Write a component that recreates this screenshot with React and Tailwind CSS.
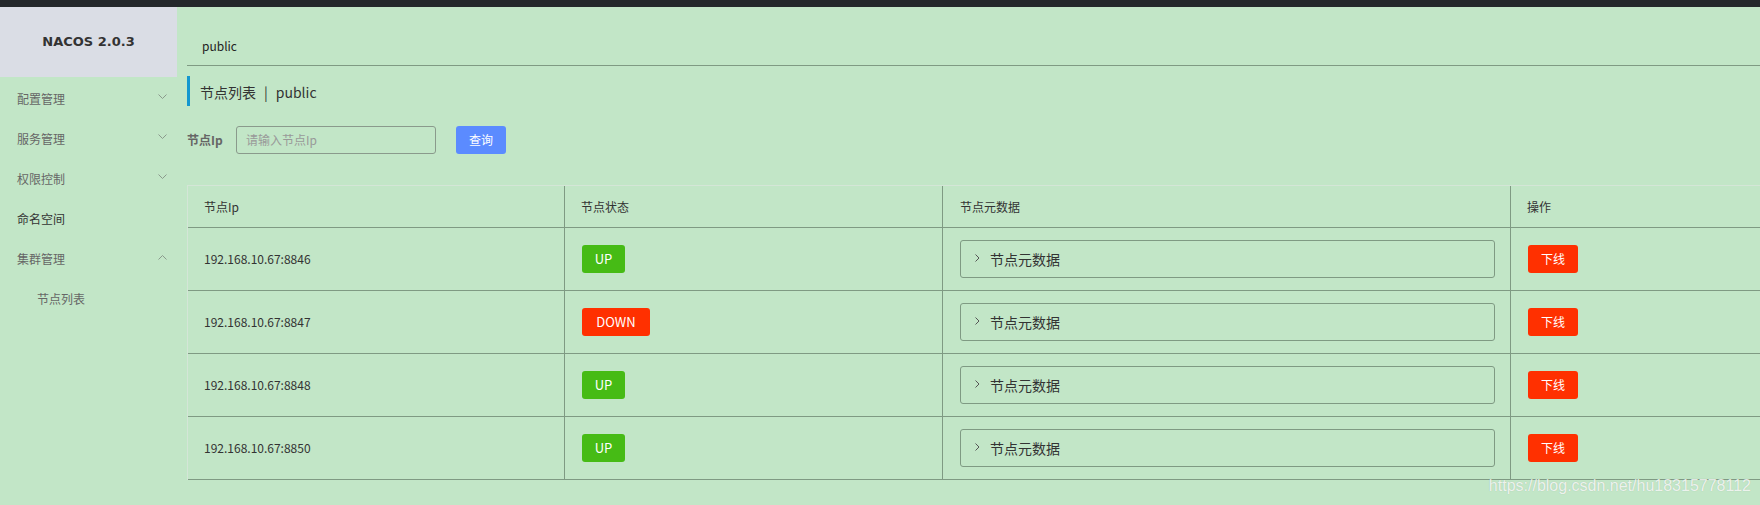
import React from "react";

const menu = [
  { label: "配置管理", arrow: "down" },
  { label: "服务管理", arrow: "down" },
  { label: "权限控制", arrow: "down" },
  { label: "命名空间", dark: true },
  { label: "集群管理", arrow: "up" },
];

const nodes = [
  { ip: "192.168.10.67:8846", state: "UP" },
  { ip: "192.168.10.67:8847", state: "DOWN" },
  { ip: "192.168.10.67:8848", state: "UP" },
  { ip: "192.168.10.67:8850", state: "UP" },
];

function Chevron({ dir }) {
  return (
    <svg width="9" height="6" viewBox="0 0 9 6" className="mb-[5px]">
      {dir === "down" ? (
        <polyline points="0.5,0.5 4.5,4.5 8.5,0.5" fill="none" stroke="#8a9a8c" strokeWidth="1" />
      ) : (
        <polyline points="0.5,5.5 4.5,1.5 8.5,5.5" fill="none" stroke="#8a9a8c" strokeWidth="1" />
      )}
    </svg>
  );
}

export default function App() {
  const font = { fontFamily: '"Noto Sans CJK SC", "Noto Sans", sans-serif' };

  return (
    <div className="w-[1760px] h-[505px] overflow-hidden bg-[#c2e6c7] flex flex-col relative" style={font}>
      <div className="h-[7px] bg-[#24282b] shrink-0"></div>

      <div className="flex flex-1">
        {/* sidebar */}
        <div className="w-[177px] shrink-0">
          <div className="h-[70px] bg-[#dadde5] flex items-center justify-center">
            <span className="text-[13px] font-bold text-[#333]" style={{ fontFamily: '"DejaVu Sans", sans-serif' }}>
              NACOS 2.0.3
            </span>
          </div>
          <div className="pt-[2px]">
            {menu.map((m) => (
              <div key={m.label} className="h-[40px] flex items-center justify-between pl-[17px] pr-[10px]">
                <span className={"text-[12px] " + (m.dark ? "text-[#333]" : "text-[#666]")}>{m.label}</span>
                {m.arrow && <Chevron dir={m.arrow} />}
              </div>
            ))}
            <div className="h-[40px] flex items-center pl-[37px]">
              <span className="text-[12px] text-[#666]">节点列表</span>
            </div>
          </div>
        </div>

        {/* main */}
        <div className="flex-1 pl-[10px]">
          <div className="h-[59px] border-b border-[#7f9a83] flex items-center pt-[20px] pl-[15px]">
            <span className="text-[12px] text-[#222]">public</span>
          </div>

          <div className="mt-[10px] h-[30px] border-l-[3px] border-[#1497cf] flex items-center pl-[10px] pt-[3px] text-[14px] text-[#333]">
            <span>节点列表</span>
            <span className="mx-[8px]">|</span>
            <span>public</span>
          </div>

          <div className="mt-[20px] h-[28px] flex items-center">
            <span className="text-[12px] font-bold text-[#666] w-[49px]">节点Ip</span>
            <div className="w-[200px] h-[28px] border border-[#8a9a8c] rounded-[3px] flex items-center pl-[9px]">
              <span className="text-[12px] text-[#999]">请输入节点Ip</span>
            </div>
            <button className="ml-[20px] w-[50px] h-[28px] rounded-[3px] bg-[#5b8bff] text-white text-[12px]">
              查询
            </button>
          </div>

          {/* table */}
          <div className="mt-[31px] border-t border-l border-[#d4e6d7]">
            <div className="grid grid-cols-[377px_378px_568px_1fr] h-[42px] border-b border-[#7f9a83] text-[12px] text-[#333]">
              <div className="flex items-center pl-[16px] border-r border-[#7f9a83]">节点Ip</div>
              <div className="flex items-center pl-[16px] border-r border-[#7f9a83]">节点状态</div>
              <div className="flex items-center pl-[17px] border-r border-[#7f9a83]">节点元数据</div>
              <div className="flex items-center pl-[16px]">操作</div>
            </div>
            {nodes.map((n) => (
              <div key={n.ip} className="grid grid-cols-[377px_378px_568px_1fr] h-[63px] border-b border-[#7f9a83]">
                <div className="flex items-center pl-[16px] border-r border-[#7f9a83] text-[12px] text-[#333]">
                  {n.ip}
                </div>
                <div className="flex items-center pl-[17px] border-r border-[#7f9a83]">
                  {n.state === "UP" ? (
                    <span className="w-[43px] h-[28px] rounded-[3px] bg-[#46bb15] text-white text-[13px] flex items-center justify-center">
                      UP
                    </span>
                  ) : (
                    <span className="w-[68px] h-[28px] rounded-[3px] bg-[#ff3000] text-white text-[13px] flex items-center justify-center">
                      DOWN
                    </span>
                  )}
                </div>
                <div className="flex items-center pl-[17px] pr-[15px] border-r border-[#7f9a83]">
                  <div className="w-full h-[38px] border border-[#7f9a83] rounded-[3px] flex items-center pl-[14px]">
                    <svg width="5" height="8" viewBox="0 0 5 8" className="mb-[3px]">
                      <polyline points="0.5,0.5 4,4 0.5,7.5" fill="none" stroke="#555" strokeWidth="1" />
                    </svg>
                    <span className="ml-[10px] text-[14px] text-[#333]">节点元数据</span>
                  </div>
                </div>
                <div className="flex items-center pl-[17px]">
                  <button className="w-[50px] h-[28px] rounded-[3px] bg-[#ff3000] text-white text-[12px]">下线</button>
                </div>
              </div>
            ))}
          </div>
        </div>
      </div>

      <div
        className="absolute right-[9px] bottom-[7px] text-[16px] text-white/80"
        style={{ fontFamily: '"Liberation Sans", Arial, sans-serif', textShadow: "0 0 1px rgba(0,0,0,0.2)" }}
      >
        https://blog.csdn.net/hu18315778112
      </div>
    </div>
  );
}
